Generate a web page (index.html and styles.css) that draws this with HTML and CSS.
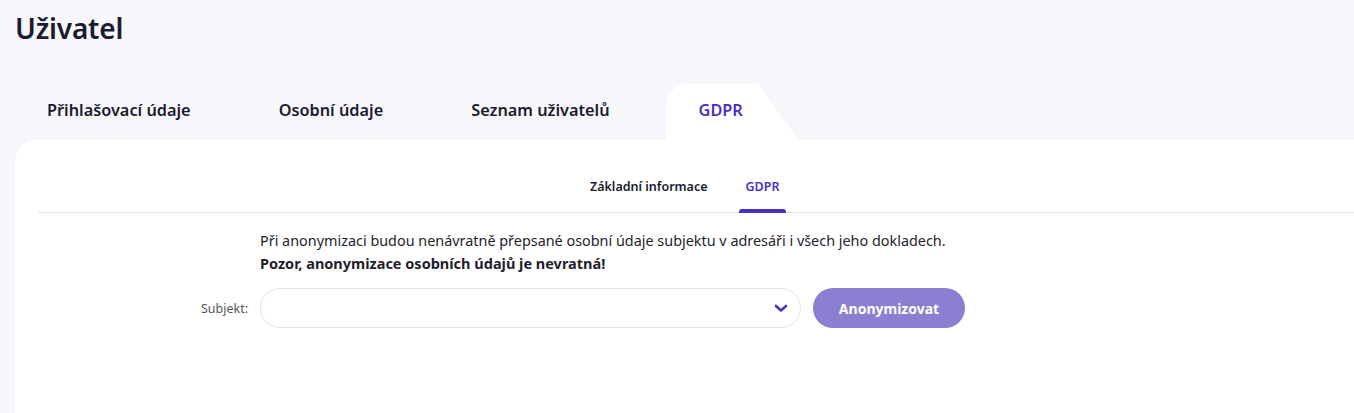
FILE: index.html
```html
<!DOCTYPE html>
<html lang="cs">
<head>
<meta charset="utf-8">
<title>Uživatel</title>
<link rel="stylesheet" href="styles.css">
</head>
<body>
<div class="page">
  <h1 class="title">Uživatel</h1>
  <nav class="tabs">
    <div class="tab">Přihlašovací údaje</div>
    <div class="tab">Osobní údaje</div>
    <div class="tab">Seznam uživatelů</div>
    <div class="tab tab-active">GDPR</div>
  </nav>
  <main class="card">
    <div class="subtabs">
      <div class="subtab">Základní informace</div>
      <div class="subtab subtab-active">GDPR</div>
    </div>
    <section class="content">
      <p class="info">Při anonymizaci budou nenávratně přepsané osobní údaje subjektu v adresáři i všech jeho dokladech.</p>
      <p class="warn">Pozor, anonymizace osobních údajů je nevratná!</p>
      <div class="form-row">
        <label class="label">Subjekt:</label>
        <div class="select">
          <svg class="chevron" width="14" height="9" viewBox="0 0 14 9"><path d="M2 2 L7 6.5 L12 2" fill="none" stroke="#4a2fc2" stroke-width="2.6" stroke-linecap="round" stroke-linejoin="round"/></svg>
        </div>
        <button class="btn">Anonymizovat</button>
      </div>
    </section>
  </main>
</div>
</body>
</html>
```

FILE: styles.css
```css
* { box-sizing: border-box; }
html, body { margin: 0; padding: 0; }
body {
  background: #f7f7fb;
  font-family: "Noto Sans", "Open Sans", sans-serif;
  color: #1b1a2e;
  height: 413px;
  overflow: hidden;
}
.page {
  padding: 0 0 0 15px;
}
.title {
  margin: 0;
  padding-top: 8px;
  height: 84px;
  font-size: 28px;
  font-weight: 600;
  line-height: 40px;
  letter-spacing: -0.2px;
}
.tabs {
  display: flex;
  height: 56px;
  margin-left: -12px;
}
.tab {
  padding: 0 44px;
  font-size: 16.3px;
  font-weight: 600;
  line-height: 52px;
  white-space: nowrap;
}
.tab-active {
  position: relative;
  margin-left: 12px;
  padding: 0 26px 0 33px;
  width: 92px;
  background: #fff;
  color: #4a2fc2;
  border-top-left-radius: 22px;
}
.tab-active::after {
  content: "";
  position: absolute;
  top: 0;
  right: -40px;
  width: 40px;
  height: 56px;
  background: linear-gradient(to top right, #fff 50%, rgba(255,255,255,0) 50.5%);
}
.card {
  background: #fff;
  border-top-left-radius: 22px;
  height: 273px;
  padding-left: 23px;
}
.subtabs {
  display: flex;
  gap: 25px;
  height: 73px;
  padding-left: 546px;
  border-bottom: 1px solid #e4e4e8;
}
.subtab {
  padding: 0 6px;
  font-size: 12.5px;
  font-weight: 600;
  line-height: 94px;
  height: 72px;
  white-space: nowrap;
}
.subtab-active {
  color: #4a2fc2;
  position: relative;
  padding: 0 7px;
}
.subtab-active::after {
  content: "";
  position: absolute;
  left: 0;
  right: 0;
  bottom: -1px;
  height: 4px;
  background: #4a2fc2;
  border-radius: 3px 3px 0 0;
}
.content {
  padding-left: 222px;
  padding-top: 17px;
}
.info, .warn {
  margin: 0;
  font-size: 14.4px;
  line-height: 22px;
  color: #1f1e2c;
}
.warn {
  font-weight: 700;
  font-size: 14.5px;
}
.form-row {
  display: flex;
  align-items: center;
  gap: 12px;
  margin-top: 14px;
  margin-left: -62px;
}
.label {
  width: 50px;
  text-align: right;
  font-size: 12.5px;
  color: #555;
}
.select {
  width: 541px;
  height: 40px;
  border: 1px solid #e4e4e8;
  border-radius: 20px;
  display: flex;
  align-items: center;
  justify-content: flex-end;
  padding-right: 12px;
}
.chevron { display: block; }
.btn {
  width: 152px;
  height: 40px;
  border: 0;
  border-radius: 20px;
  background: #8a7fd1;
  color: #fff;
  font-family: inherit;
  font-size: 14px;
  font-weight: 700;
}
```
